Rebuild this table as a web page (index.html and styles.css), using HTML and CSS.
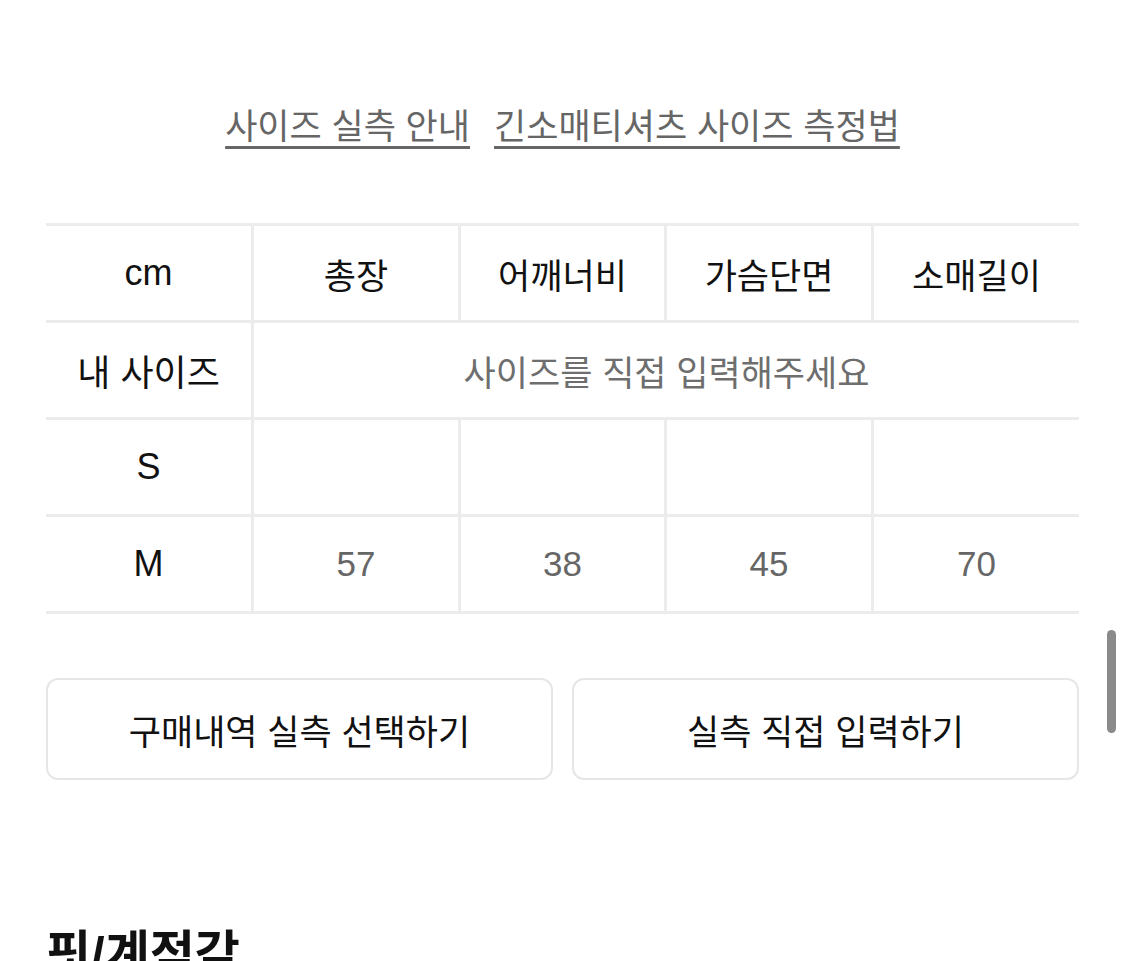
FILE: index.html
```html
<!DOCTYPE html>
<html lang="ko">
<head>
<meta charset="utf-8">
<title>사이즈</title>
<link rel="stylesheet" href="styles.css">
</head>
<body>
<main class="page">
  <nav class="guide-links">
    <a class="guide-link" href="#">사이즈 실측 안내</a>
    <a class="guide-link" href="#">긴소매티셔츠 사이즈 측정법</a>
  </nav>

  <table class="size-table">
    <thead>
      <tr>
        <th class="label">cm</th>
        <th>총장</th>
        <th>어깨너비</th>
        <th>가슴단면</th>
        <th>소매길이</th>
      </tr>
    </thead>
    <tbody>
      <tr>
        <th class="label">내 사이즈</th>
        <td class="placeholder" colspan="4">사이즈를 직접 입력해주세요</td>
      </tr>
      <tr>
        <th class="label">S</th>
        <td></td><td></td><td></td><td></td>
      </tr>
      <tr>
        <th class="label">M</th>
        <td>57</td><td>38</td><td>45</td><td>70</td>
      </tr>
    </tbody>
  </table>

  <div class="actions">
    <button class="action-btn" type="button">구매내역 실측 선택하기</button>
    <button class="action-btn" type="button">실측 직접 입력하기</button>
  </div>

  <h2 class="section-title">핏/계적감</h2>
</main>
<div class="scrollbar"></div>
</body>
</html>
```

FILE: styles.css
```css
* { box-sizing: border-box; }

html, body {
  margin: 0;
  padding: 0;
  background: #ffffff;
  height: 961px;
  overflow: hidden;
}

body {
  font-family: "Liberation Sans", "Noto Sans CJK KR", sans-serif;
  color: #111111;
}

.page {
  padding: 104px 46px 0 46px;
}

.guide-links {
  display: flex;
  justify-content: center;
  gap: 24px;
}

.guide-link {
  font-size: 35px;
  line-height: 46px;
  color: #666666;
  text-decoration: underline;
  text-decoration-thickness: 3px;
  text-underline-offset: 7px;
}

.size-table {
  width: 100%;
  margin-top: 73px;
  border-collapse: collapse;
  table-layout: fixed;
}

.size-table th,
.size-table td {
  height: 97px;
  padding: 0;
  text-align: center;
  vertical-align: middle;
  font-size: 35px;
  border: 3px solid #ececec;
}

.size-table tr > :first-child { border-left: none; }
.size-table tr > :last-child { border-right: none; }

.size-table th {
  font-weight: 400;
  color: #111111;
}

.size-table th.label:first-child {
  font-size: 36px;
}

.size-table td {
  color: #666666;
}

.size-table td.placeholder {
  color: #6e6e6e;
}

.actions {
  display: grid;
  grid-template-columns: 1fr 1fr;
  gap: 19px;
  margin-top: 64px;
}

.action-btn {
  height: 102px;
  background: #ffffff;
  border: 2px solid #e6e6e6;
  border-radius: 12px;
  font-family: "Liberation Sans", "Noto Sans CJK KR", sans-serif;
  font-size: 35px;
  color: #111111;
}

.section-title {
  margin: 142px 0 0 0;
  font-size: 49px;
  line-height: 64px;
  font-weight: 700;
  color: #111111;
}

.scrollbar {
  position: absolute;
  left: 1107px;
  top: 630px;
  width: 9px;
  height: 103px;
  border-radius: 5px;
  background: #8a8a8a;
}
```
